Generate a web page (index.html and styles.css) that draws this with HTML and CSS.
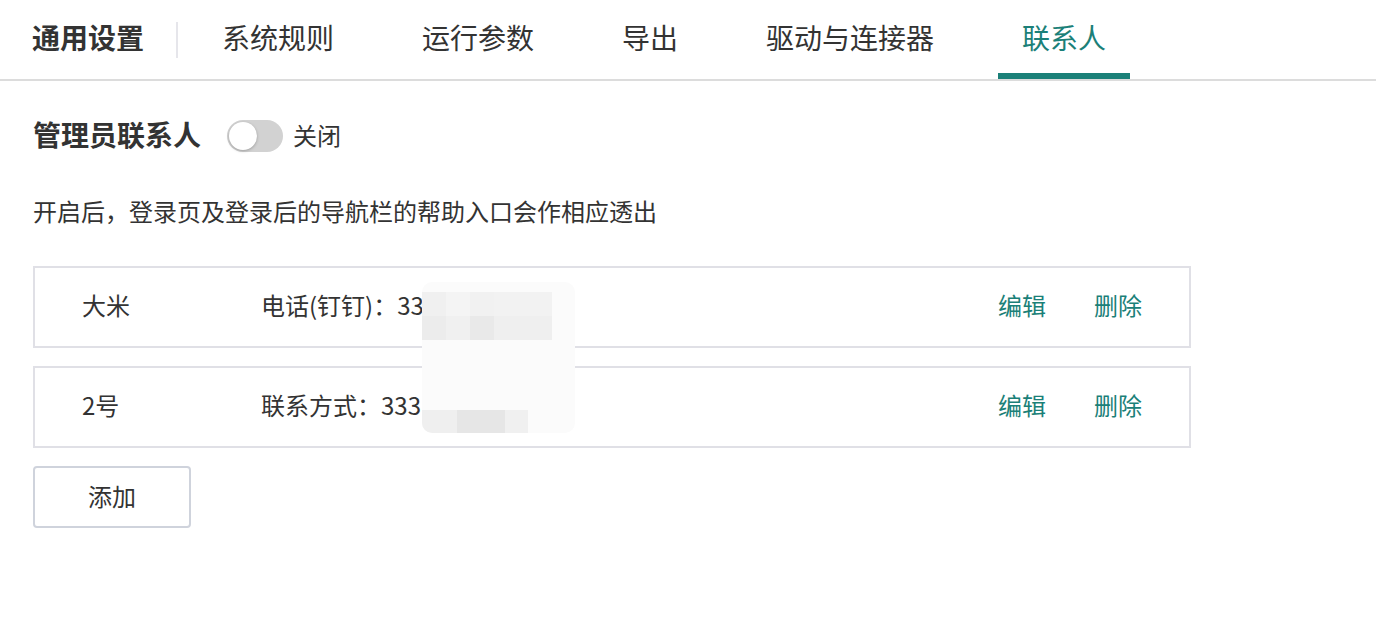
FILE: index.html
```html
<!DOCTYPE html>
<html lang="zh-CN">
<head>
  <meta charset="UTF-8">
  <meta name="viewport" content="width=device-width, initial-scale=1.0">
  <title>联系人设置</title>
  <link rel="stylesheet" href="styles.css">
</head>
<body>
  <div class="header">
    <div class="header-title">通用设置</div>
    <div class="header-divider"></div>
    <div class="tabs">
      <a class="tab">系统规则</a>
      <a class="tab">运行参数</a>
      <a class="tab">导出</a>
      <a class="tab">驱动与连接器</a>
      <a class="tab active">联系人</a>
    </div>
  </div>

  <div class="main">
    <div class="switch-row">
      <span class="section-title">管理员联系人</span>
      <span class="switch"><span class="knob"></span></span>
      <span class="switch-label">关闭</span>
    </div>

    <p class="desc">开启后，登录页及登录后的导航栏的帮助入口会作相应透出</p>

    <div class="contact-list">
      <div class="contact">
        <span class="contact-name">大米</span>
        <span class="contact-info">电话(钉钉)：333</span>
        <span class="contact-actions"><a>编辑</a><a>删除</a></span>
      </div>
      <div class="contact">
        <span class="contact-name">2号</span>
        <span class="contact-info">联系方式：333</span>
        <span class="contact-actions"><a>编辑</a><a>删除</a></span>
      </div>

      <!-- 打码区域 -->
      <div class="mosaic">
        <div class="tile" style="left:0;top:10px;width:24px;height:24px;background:#f0f0f0"></div>
        <div class="tile" style="left:24px;top:10px;width:24px;height:24px;background:#f4f4f4"></div>
        <div class="tile" style="left:48px;top:10px;width:24px;height:24px;background:#f1f1f1"></div>
        <div class="tile" style="left:72px;top:10px;width:58px;height:24px;background:#f2f2f2"></div>
        <div class="tile" style="left:0;top:34px;width:24px;height:24px;background:#ececec"></div>
        <div class="tile" style="left:24px;top:34px;width:24px;height:24px;background:#f0f0f0"></div>
        <div class="tile" style="left:48px;top:34px;width:24px;height:24px;background:#e9e9e9"></div>
        <div class="tile" style="left:72px;top:34px;width:58px;height:24px;background:#efefef"></div>
        <div class="tile" style="left:0;top:128px;width:35px;height:23px;background:#efefef"></div>
        <div class="tile" style="left:35px;top:128px;width:48px;height:23px;background:#e6e6e6"></div>
        <div class="tile" style="left:83px;top:128px;width:23px;height:23px;background:#f0f0f0"></div>
      </div>
    </div>

    <button class="add-btn">添加</button>
  </div>
</body>
</html>
```

FILE: styles.css
```css
body {
  font-family: "Noto Sans CJK SC", "Noto Sans", sans-serif;
  color: #333;
  background-color: #fff;
  margin: 0;
  padding: 0;
}
.header {
  display: flex;
  align-items: center;
  height: 79px;
  padding-left: 32px;
  border-bottom: 2px solid #dcdcdc;
}
.header-title {
  font-size: 28px;
  font-weight: bold;
  color: #333;
  padding-bottom: 5px;
}
.header-divider {
  width: 2px;
  height: 36px;
  background-color: #e6e6eb;
  margin: 0 20px 0 32px;
}
.tabs {
  display: flex;
  height: 100%;
  gap: 40px;
}
.tab {
  display: flex;
  align-items: center;
  box-sizing: border-box;
  height: 100%;
  padding: 0 24px 5px;
  border-top: 6px solid transparent;
  border-bottom: 6px solid transparent;
  font-size: 28px;
  color: #333;
  cursor: pointer;
}
.tab.active {
  color: #1b8078;
  border-bottom-color: #1b8078;
}
.main {
  padding: 39px 32px 0 33px;
}
.switch-row {
  display: flex;
  align-items: center;
  height: 32px;
}
.section-title {
  font-size: 28px;
  font-weight: bold;
  padding-bottom: 4px;
}
.switch {
  position: relative;
  width: 56px;
  height: 32px;
  border-radius: 16px;
  background-color: #d2d2d2;
  margin: 0 10px 0 26px;
}
.knob {
  position: absolute;
  left: 2px;
  top: 2px;
  width: 28px;
  height: 28px;
  border-radius: 50%;
  background-color: #fff;
  box-shadow: 0 1px 3px rgba(0,0,0,0.25);
}
.switch-label {
  font-size: 24px;
  padding-bottom: 4px;
}
.desc {
  font-size: 24px;
  line-height: 34px;
  margin: 42px 0 38px;
}
.contact-list {
  position: relative;
  width: 1158px;
}
.contact {
  display: flex;
  align-items: center;
  box-sizing: border-box;
  height: 82px;
  padding: 0 47px 5px 47px;
  border: 2px solid #e0e0e6;
  margin-bottom: 18px;
  font-size: 24px;
}
.contact-name {
  width: 179px;
}
.contact-info {
  flex: 1;
}
.contact-actions {
  display: flex;
  gap: 48px;
}
.contact-actions a {
  color: #1b8078;
  cursor: pointer;
}
.mosaic {
  position: absolute;
  left: 389px;
  top: 16px;
  width: 153px;
  height: 151px;
  border-radius: 10px;
  background-color: #fbfbfb;
  overflow: hidden;
}
.tile {
  position: absolute;
}
.add-btn {
  display: block;
  width: 158px;
  height: 62px;
  padding: 0 0 4px;
  font-family: inherit;
  font-size: 24px;
  color: #333;
  background-color: #fff;
  border: 2px solid #cfd3dc;
  border-radius: 4px;
  cursor: pointer;
}
```
